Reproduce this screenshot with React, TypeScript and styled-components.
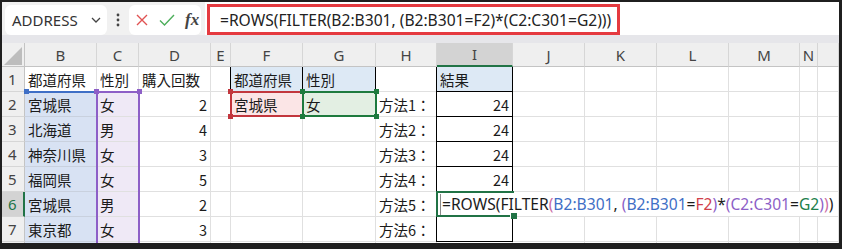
import React from "react";
import styled, { createGlobalStyle, css } from "styled-components";

const GlobalStyle = createGlobalStyle`
  html, body {
    margin: 0;
    padding: 0;
    background: #1f1f1f;
  }
`;

const COLS = [23, 72, 42, 72, 20, 72, 73, 61, 76, 72, 72, 72, 71, 18, 21];
const LETTERS = ["B", "C", "D", "E", "F", "G", "H", "I", "J", "K", "L", "M", "N", ""];

const ink = "#1b1b1b";
const blue = "#3f6fc6";
const violet = "#8d5fc7";
const red = "#d0404b";
const green = "#21804a";
const pink = "#c96aa4";

const Screen = styled.div`
  width: 842px;
  height: 249px;
  box-sizing: border-box;
  padding: 2px 3px 6px 2px;
  background: #1f1f1f;
`;

const Window = styled.div`
  height: 100%;
  display: flex;
  flex-direction: column;
  overflow: hidden;
  background: #fff;
  font-family: "Noto Sans CJK JP", "Noto Sans", sans-serif;
`;

const Toolbar = styled.div`
  height: 33px;
  flex: none;
  display: flex;
  align-items: flex-end;
  padding-left: 3px;
  background: #f1f1f1;
`;

const NameBox = styled.div`
  width: 102px;
  height: 30px;
  box-sizing: border-box;
  display: flex;
  align-items: center;
  justify-content: space-between;
  padding: 0 6px 0 7px;
  background: #fff;
  border-radius: 6px;
  font-family: "Noto Sans", sans-serif;
  font-size: 15px;
  color: #333;
`;

const Kebab = styled.div`
  width: 22px;
  height: 30px;
  display: flex;
  align-items: center;
  justify-content: center;
`;

const FxBox = styled.div`
  width: 72px;
  height: 30px;
  box-sizing: border-box;
  display: flex;
  align-items: center;
  gap: 11px;
  padding-left: 7px;
  background: #fff;
  border-radius: 6px;
`;

const FxLabel = styled.span`
  font-family: "Liberation Serif", serif;
  font-style: italic;
  font-weight: bold;
  font-size: 17px;
  color: #444;
  margin-left: -1px;
`;

const FormulaArea = styled.div`
  flex: 1;
  align-self: stretch;
  margin-left: 4px;
  padding: 2px 0 0 2px;
  background: #fff;
`;

const Callout = styled.div`
  width: 413px;
  height: 31px;
  box-sizing: border-box;
  border: 3px solid #e53a40;
  display: flex;
  align-items: center;
  padding-left: 10px;
  font-family: "Noto Sans", sans-serif;
  font-size: 15.6px;
  color: #222;
  white-space: pre;
`;

const Strip = styled.div`
  height: 8px;
  flex: none;
  background: #e6e6ea;
`;

const Sheet = styled.div`
  display: grid;
  grid-template-columns: ${COLS.map((w) => `${w}px`).join(" ")};
  grid-template-rows: 24px repeat(8, 25px);
`;

type Place = { $col: number | string; $row: number | string };

const placed = css<Place>`
  grid-column: ${(p) => p.$col};
  grid-row: ${(p) => p.$row};
`;

const ColHead = styled.div<Place & { $on?: boolean }>`
  ${placed};
  box-sizing: border-box;
  display: flex;
  align-items: center;
  justify-content: center;
  background: ${(p) => (p.$on ? "#d3d3d3" : "#efefef")};
  border-right: 1px solid #d6d6d6;
  border-bottom: ${(p) => (p.$on ? "2px solid #217346" : "1px solid #c4c4c4")};
  font-family: "Noto Sans", sans-serif;
  font-size: 15px;
  color: #444;
`;

const Corner = styled.div`
  grid-column: 1;
  grid-row: 1;
  background: #efefef;
  border-right: 1px solid #c4c4c4;
  border-bottom: 1px solid #c4c4c4;
  display: flex;
  align-items: flex-end;
  justify-content: flex-end;
  padding: 0 2px 1px 0;
`;

const RowHead = styled.div<Place & { $on?: boolean }>`
  ${placed};
  box-sizing: border-box;
  display: flex;
  align-items: center;
  padding-left: 6px;
  background: ${(p) => (p.$on ? "#d3d3d3" : "#efefef")};
  border-right: ${(p) => (p.$on ? "2px solid #217346" : "1px solid #c4c4c4")};
  border-bottom: 1px solid #d6d6d6;
  font-family: "Noto Sans", sans-serif;
  font-size: 15px;
  color: ${(p) => (p.$on ? "#217346" : "#444")};
`;

type Tone = "plain" | "blue" | "violet" | "head" | "pink" | "mint";

const TONES: Record<Tone, string> = {
  plain: "#fff",
  blue: "#d8e2f3",
  violet: "#efe9f6",
  head: "#dde9f5",
  pink: "#fbe5e6",
  mint: "#e3efe3",
};

const Cell = styled.div<Place & { $tone: Tone; $num?: boolean; $boxed?: boolean }>`
  ${placed};
  box-sizing: border-box;
  display: flex;
  align-items: center;
  justify-content: ${(p) => (p.$num ? "flex-end" : "flex-start")};
  padding: 0 3px;
  white-space: nowrap;
  background: ${(p) => TONES[p.$tone]};
  border-right: 1px solid ${(p) => (p.$boxed ? "#000" : "#e0e0e0")};
  border-bottom: 1px solid ${(p) => (p.$boxed ? "#000" : p.$tone === "blue" ? "#c9d1de" : "#e0e0e0")};
  box-shadow: ${(p) => (p.$boxed ? "-1px 0 0 #000" : "none")};
  font-size: 14.5px;
  color: ${ink};
`;

const Caret = styled.span`
  width: 1px;
  height: 21px;
  background: #8a8a8a;
  margin-right: 1px;
  flex: none;
`;

const FormulaText = styled.span`
  font-family: "Noto Sans", sans-serif;
  font-size: 15.6px;
  white-space: pre;
  position: relative;
  z-index: 3;
`;

const Tok = styled.span<{ $c: string }>`
  color: ${(p) => p.$c};
`;

const Range = styled.div<Place & { $color: string; $sides: string }>`
  ${placed};
  position: relative;
  z-index: 2;
  pointer-events: none;
  margin: -1px -1px 0 -1px;
  border-style: solid;
  border-color: ${(p) => p.$color};
  border-width: ${(p) => p.$sides};
`;

const Handle = styled.span<{ $color: string; $at: string }>`
  position: absolute;
  width: 5px;
  height: 5px;
  background: ${(p) => p.$color};
  ${(p) => p.$at};
`;

const FillHandle = styled.span`
  position: absolute;
  right: -3px;
  bottom: -4px;
  width: 6px;
  height: 6px;
  background: #217346;
  border: 1px solid #fff;
  border-right: none;
  border-bottom: none;
`;

const TL = "top: -4px; left: -4px;";
const TR = "top: -4px; right: -4px;";
const BL = "bottom: -4px; left: -4px;";
const BR = "bottom: -4px; right: -4px;";

const formula: [string, string][] = [
  ["=ROWS(", ink],
  ["FILTER", ink],
  ["(", pink],
  ["B2:B301", blue],
  [", ", ink],
  ["(", violet],
  ["B2:B301", blue],
  ["=", ink],
  ["F2", red],
  [")", violet],
  ["*", ink],
  ["(", violet],
  ["C2:C301", violet],
  ["=", ink],
  ["G2", green],
  [")", violet],
  [")", pink],
  [")", ink],
];

const FORMULA_TEXT = formula.map(([t]) => t).join("");

const data: string[][] = [
  ["都道府県", "性別", "購入回数", "", "都道府県", "性別", "", "結果"],
  ["宮城県", "女", "2", "", "宮城県", "女", "方法1：", "24"],
  ["北海道", "男", "4", "", "", "", "方法2：", "24"],
  ["神奈川県", "女", "3", "", "", "", "方法3：", "24"],
  ["福岡県", "女", "5", "", "", "", "方法4：", "24"],
  ["宮城県", "男", "2", "", "", "", "方法5：", "="],
  ["東京都", "女", "3", "", "", "", "方法6：", ""],
  [],
];

// column index in grid: row header = 1, B = 2 ... O = 15
const toneOf = (r: number, c: number): Tone => {
  if (r === 1) return c === 6 || c === 7 || c === 9 ? "head" : "plain";
  if (r === 2 && c === 6) return "pink";
  if (r === 2 && c === 7) return "mint";
  if (c === 2) return "blue";
  if (c === 3) return "violet";
  return "plain";
};

const Cross = () => (
  <svg width="12" height="12" viewBox="0 0 12 12">
    <path d="M1 1L11 11M11 1L1 11" stroke="#e05252" strokeWidth="1.4" fill="none" />
  </svg>
);

const Check = () => (
  <svg width="16" height="12" viewBox="0 0 16 12">
    <path d="M1 6.5L5.5 11L15 1" stroke="#4cae5a" strokeWidth="1.4" fill="none" />
  </svg>
);

const Chevron = () => (
  <svg width="10" height="6" viewBox="0 0 10 6">
    <path d="M1 1L5 5L9 1" stroke="#444" strokeWidth="1.3" fill="none" />
  </svg>
);

const Dots = () => (
  <svg width="4" height="14" viewBox="0 0 4 14">
    <circle cx="2" cy="2" r="1.4" fill="#444" />
    <circle cx="2" cy="7" r="1.4" fill="#444" />
    <circle cx="2" cy="12" r="1.4" fill="#444" />
  </svg>
);

const App: React.FC = () => {
  const rows = data.map((vals, i) => {
    const r = i + 1;
    const gridRow = r + 1;
    const out: React.ReactNode[] = [
      <RowHead key={`h${r}`} $col={1} $row={gridRow} $on={r === 6}>
        {r < 8 ? r : ""}
      </RowHead>,
    ];
    for (let c = 2; c <= 15; c++) {
      if (r === 6 && c > 9) break;
      const v = vals[c - 2] || "";
      const isActive = r === 6 && c === 9;
      const num = (c === 4 && r > 1) || (c === 9 && r > 1 && r < 6);
      const boxed = ((c === 6 || c === 7) && r === 1) || (c === 9 && r <= 7 && !isActive);
      out.push(
        <Cell
          key={`${r}-${c}`}
          $col={isActive ? "9 / -1" : c}
          $row={gridRow}
          $tone={toneOf(r, c)}
          $num={num}
          $boxed={boxed}
        >
          {isActive ? (
            <>
              <Caret />
              <FormulaText>
                {formula.map(([t, col], k) => (
                  <Tok key={k} $c={col}>
                    {t}
                  </Tok>
                ))}
              </FormulaText>
            </>
          ) : (
            v
          )}
        </Cell>
      );
    }
    return out;
  });

  return (
    <>
      <GlobalStyle />
      <Screen>
        <Window>
          <Toolbar>
            <NameBox>
              <span>ADDRESS</span>
              <Chevron />
            </NameBox>
            <Kebab>
              <Dots />
            </Kebab>
            <FxBox>
              <Cross />
              <Check />
              <FxLabel>fx</FxLabel>
            </FxBox>
            <FormulaArea>
              <Callout>{FORMULA_TEXT}</Callout>
            </FormulaArea>
          </Toolbar>
          <Strip />
          <Sheet>
            <Corner>
              <svg width="18" height="18" viewBox="0 0 18 18">
                <path d="M18 0V18H0Z" fill="#bdbdbd" />
              </svg>
            </Corner>
            {LETTERS.map((l, i) => (
              <ColHead key={`c${i}`} $col={i + 2} $row={1} $on={l === "I"}>
                {l}
              </ColHead>
            ))}
            {rows}

            <Range $col={2} $row="3 / 10" $color={blue} $sides="2px 0 0 0">
              <Handle $color={blue} $at="top: -4px; left: 0;" />
            </Range>
            <Range $col={3} $row="3 / 10" $color={violet} $sides="2px 2px 0 2px">
              <Handle $color={violet} $at={TL} />
              <Handle $color={violet} $at={TR} />
            </Range>
            <Range $col={6} $row={3} $color="#c2363d" $sides="2px">
              <Handle $color="#c2363d" $at={TL} />
              <Handle $color="#c2363d" $at={BL} />
            </Range>
            <Range $col={7} $row={3} $color="#1e7a3e" $sides="2px">
              <Handle $color="#1e7a3e" $at={TL} />
              <Handle $color="#1e7a3e" $at={TR} />
              <Handle $color="#1e7a3e" $at={BL} />
              <Handle $color="#1e7a3e" $at={BR} />
            </Range>
            <Range $col={9} $row={7} $color="#217346" $sides="2px 0 2px 2px">
              <FillHandle />
            </Range>
          </Sheet>
        </Window>
      </Screen>
    </>
  );
};

export default App;
